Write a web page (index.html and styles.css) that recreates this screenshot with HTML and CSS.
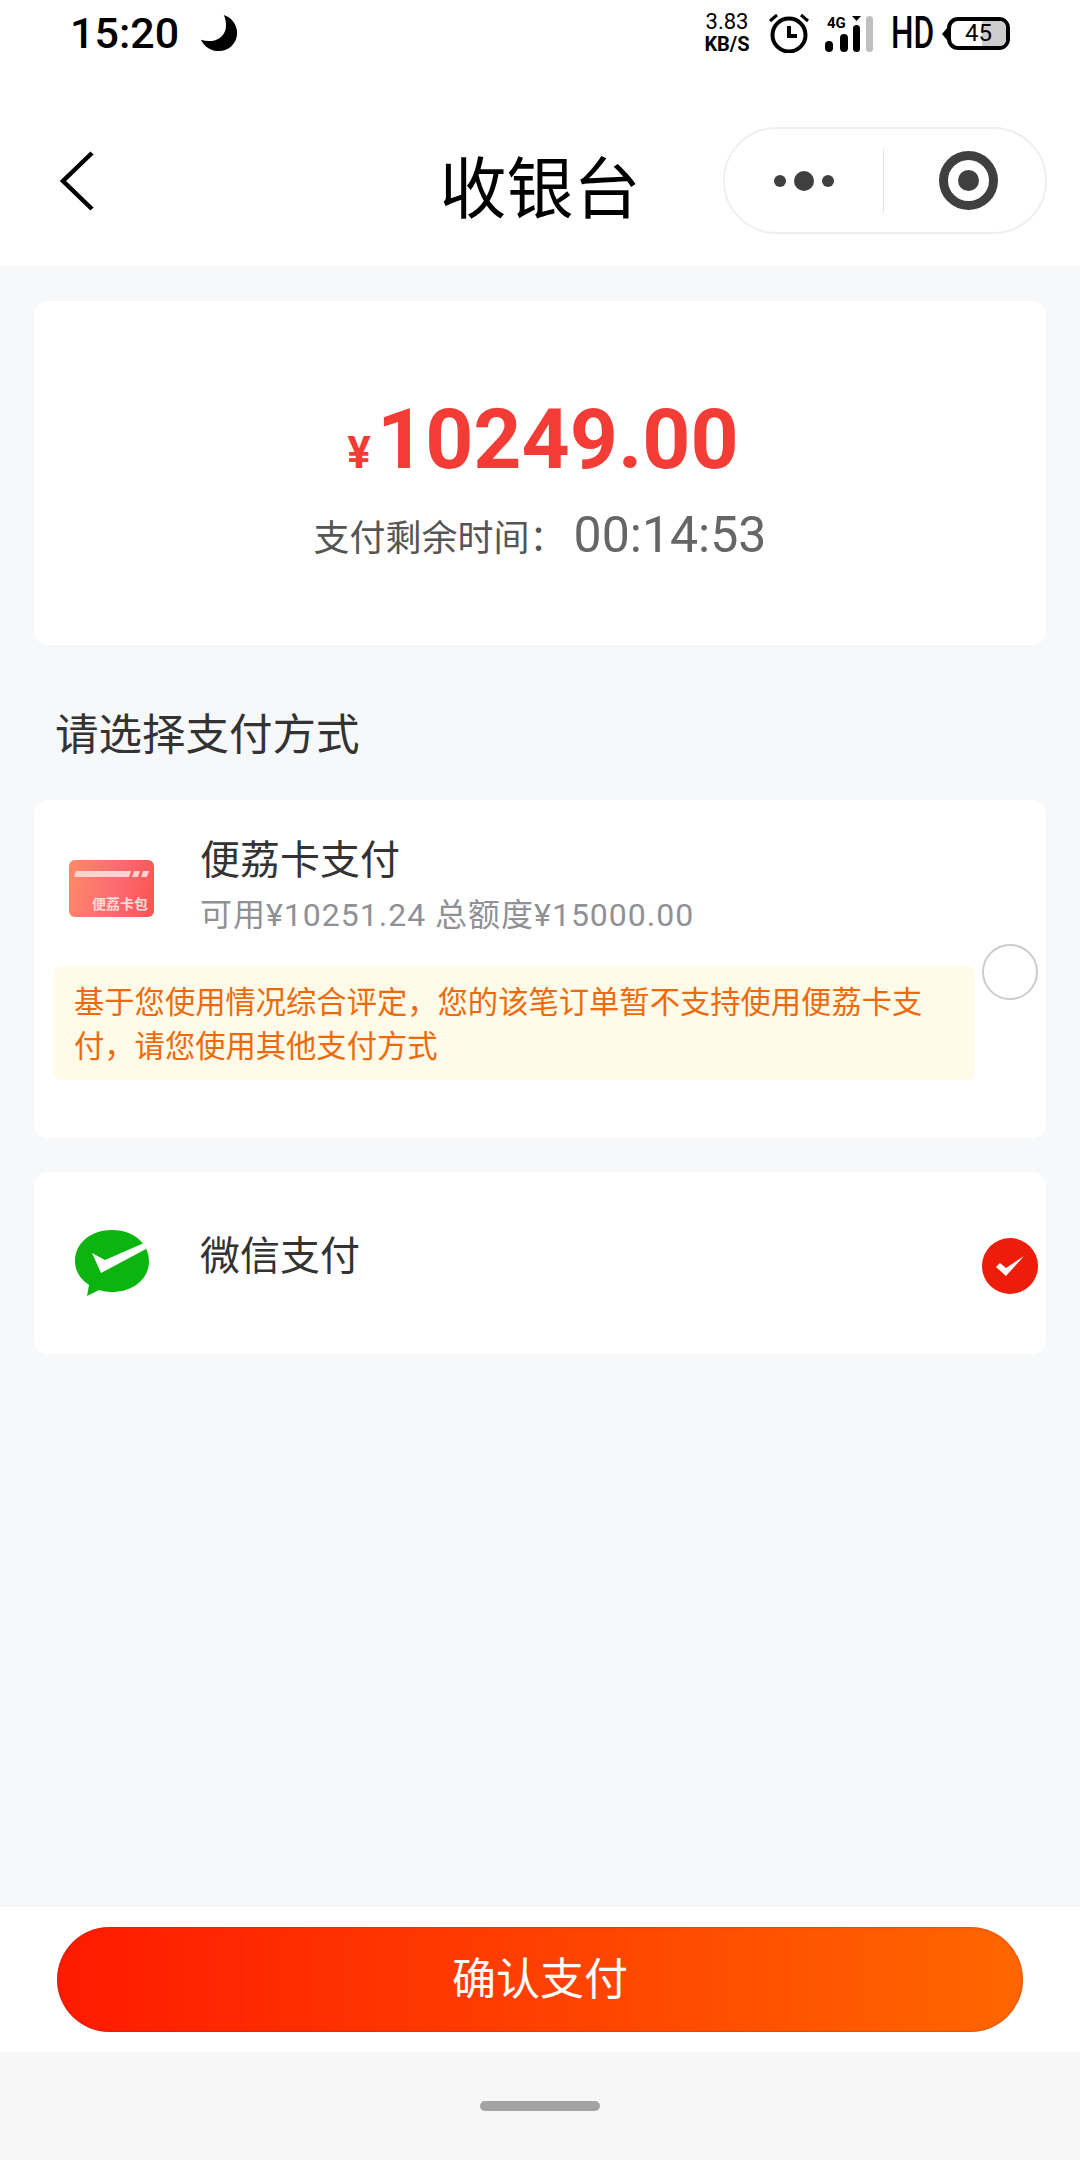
FILE: index.html
```html
<!DOCTYPE html>
<html lang="zh">
<head>
    <meta charset="UTF-8">
    <meta name="viewport" content="width=device-width, initial-scale=1.0">
    <title>收银台</title>
    <link rel="stylesheet" href="styles.css">
</head>
<body>
    <div class="page">
        <div class="status-bar">
            <div class="status-left">
                <span class="clock">15:20</span>
                <svg class="moon" width="40" height="40" viewBox="0 0 42 40"><path d="M26 1C33 3 40 10 40 20C40 31 31 39 21 39C13 39 6 35 2 27C13 31 25 27 28 16C29 10 28 5 26 1Z" fill="#000"/></svg>
            </div>
            <div class="status-right">
                <div class="speed"><span>3.83</span><span class="speed-unit">KB/S</span></div>
                <svg class="alarm" width="42" height="40" viewBox="0 0 42 40"><circle cx="21" cy="22" r="16.5" fill="none" stroke="#000" stroke-width="4"/><path d="M21 13V23H29" fill="none" stroke="#000" stroke-width="4"/><path d="M2 8L9 2M40 8L33 2" stroke="#000" stroke-width="3"/></svg>
                <div class="signal">
                    <span class="net">4G</span>
                    <svg width="50" height="40" viewBox="0 0 50 40"><rect x="0" y="28" width="8" height="11" rx="4" fill="#000"/><rect x="15" y="21" width="8" height="18" rx="4" fill="#000"/><rect x="28" y="12" width="7" height="27" rx="3.500" fill="#000"/><path d="M27 3H36L31.500 8Z" fill="#000"/><rect x="41" y="3" width="7" height="36" rx="3.500" fill="#bfbfbf"/></svg>
                </div>
                <span class="hd">HD</span>
                <div class="battery"><span class="battery-fill"></span><span class="battery-num">45</span></div>
            </div>
        </div>

        <div class="nav-bar">
            <svg class="back" width="36" height="60" viewBox="0 0 36 60"><path d="M33 2L4 30L33 58" fill="none" stroke="#000" stroke-width="4.500"/></svg>
            <h1 class="nav-title">收银台</h1>
            <div class="capsule">
                <div class="capsule-dots"><i class="dot"></i><i class="dot dot-big"></i><i class="dot"></i></div>
                <div class="capsule-line"></div>
                <div class="capsule-target"><i></i></div>
            </div>
        </div>

        <div class="content">
            <div class="card amount-card">
                <div class="amount"><span class="amount-sign">¥</span>10249.00</div>
                <div class="timer">支付剩余时间&#xFF1A;<span class="timer-num">00:14:53</span></div>
            </div>

            <div class="section-title">请选择支付方式</div>

            <div class="card pay-card litchi">
                <div class="pay-main">
                    <div class="pay-head">
                        <div class="pay-icon">
                            <div class="litchi-card">
                                <div class="litchi-stripe"><i class="stripe-long"></i><i class="stripe-short"></i><i class="stripe-short"></i></div>
                                <span class="litchi-text">便荔卡包</span>
                            </div>
                        </div>
                        <div class="pay-info">
                            <div class="pay-name">便荔卡支付</div>
                            <div class="pay-sub">可用¥10251.24 总额度¥15000.00</div>
                        </div>
                    </div>
                    <div class="notice">基于您使用情况综合评定&#xFF0C;您的该笔订单暂不支持使用便荔卡支付&#xFF0C;请您使用其他支付方式</div>
                </div>
                <span class="radio"></span>
            </div>

            <div class="card pay-card wechat">
                <div class="pay-main">
                    <div class="pay-head">
                        <div class="pay-icon">
                            <svg class="wechat-logo" width="74" height="66" viewBox="0 0 74 66"><path d="M37 0C58 0 74 13 74 31C74 49 58 62 37 62C32 62 28 61 24 60L12 66L14 55C5 49 0 41 0 31C0 13 16 0 37 0Z" fill="#0cb40f"/><path d="M17 23L30 30L69 13L71 19L26 43Z" fill="#fff"/></svg>
                        </div>
                        <div class="pay-info">
                            <div class="pay-name">微信支付</div>
                        </div>
                    </div>
                </div>
                <span class="radio radio-on">
                    <svg width="28" height="20" viewBox="0 0 28 20"><path d="M0 11L4 7L10 12L28 0L10 20Z" fill="#fff"/></svg>
                </span>
            </div>
        </div>

        <div class="footer">
            <button class="pay-btn">确认支付</button>
        </div>
        <div class="home-area"><span class="home-bar"></span></div>
    </div>
</body>
</html>
```

FILE: styles.css
```css
* { box-sizing: border-box; }
body { margin: 0; font-family: Roboto, "Noto Sans CJK SC", sans-serif; background-color: #f7f8fa; }
.page { width: 1080px; height: 2160px; display: flex; flex-direction: column; overflow: hidden; }

/* status bar */
.status-bar { height: 66px; background-color: #fff; display: flex; justify-content: space-between; align-items: center; padding: 0 70px; }
.status-left { display: flex; align-items: center; gap: 20px; }
.clock { font-size: 43px; font-weight: 500; color: #000; line-height: 1; }
.status-right { display: flex; align-items: center; }
.speed { display: flex; flex-direction: column; align-items: center; width: 48px; font-size: 22px; line-height: 22px; color: #000; }
.speed-unit { font-size: 20px; font-weight: 700; }
.alarm { margin-left: 17px; }
.signal { position: relative; width: 50px; height: 40px; margin-left: 15px; }
.signal svg { display: block; }
.net { position: absolute; left: 2px; top: 2px; font-size: 15px; line-height: 16px; font-weight: 700; color: #000; }
.hd { width: 38px; margin-left: 16px; font-size: 44px; font-weight: 500; color: #000; line-height: 1; transform: scaleX(0.72); transform-origin: left center; white-space: nowrap; }
.battery { position: relative; width: 63px; height: 33px; margin-left: 18px; border: 4px solid #000; border-radius: 11px; }
.battery::before { content: ""; position: absolute; left: -9px; top: 7px; border: 6px solid transparent; border-left: 0; border-right: 5px solid #000; }
.battery-fill { position: absolute; right: 0; top: 0; bottom: 0; width: 24px; background-color: #ccc; border-radius: 0 6px 6px 0; }
.battery-num { position: absolute; left: 0; right: 0; top: 0; text-align: center; font-size: 24px; line-height: 25px; color: #000; }

/* nav bar */
.nav-bar { height: 200px; background-color: #fff; display: grid; grid-template-columns: 1fr auto 1fr; align-items: start; }
.back { margin: 85px 0 0 59px; }
.nav-title { margin: 84px 0 0; font-size: 67px; font-weight: 400; color: #000; line-height: 1; font-family: "Noto Sans CJK SC", sans-serif; }
.capsule { justify-self: end; width: 324px; height: 107px; margin: 61px 33px 0 0; border: 2px solid #efefef; border-radius: 54px; display: flex; align-items: center; }
.capsule-dots { width: 158px; display: flex; align-items: center; justify-content: center; gap: 8px; }
.dot { width: 12px; height: 12px; border-radius: 50%; background-color: #3f3f3f; }
.dot-big { width: 20px; height: 20px; }
.capsule-line { width: 1px; height: 64px; background-color: #e5e5e5; }
.capsule-target { flex: 1; display: flex; align-items: center; justify-content: center; padding-left: 8px; }
.capsule-target i { width: 59px; height: 59px; border: 9px solid #3f3f3f; border-radius: 50%; display: flex; align-items: center; justify-content: center; }
.capsule-target i::after { content: ""; width: 21px; height: 21px; border-radius: 50%; background-color: #3f3f3f; }

/* content */
.content { flex: 1; padding: 35px 34px 0; display: flex; flex-direction: column; }
.card { background-color: #fff; border-radius: 14px; }
.amount-card { height: 344px; display: flex; flex-direction: column; align-items: center; padding-top: 90px; }
.amount { margin-left: 6px; font-size: 84px; font-weight: 700; color: #f43c36; line-height: 98px; }
.amount-sign { font-size: 44px; margin-right: 6px; }
.timer { font-size: 36px; color: #555; line-height: 54px; margin-top: 6px; display: flex; align-items: center; font-family: "Noto Sans CJK SC", sans-serif; }
.timer-num { font-size: 50px; color: #666; font-family: Roboto, sans-serif; margin-left: 8px; }
.section-title { height: 155px; padding: 57px 0 0 21px; font-size: 43.500px; color: #333; line-height: 60px; font-family: "Noto Sans CJK SC", sans-serif; }

.pay-card { display: flex; align-items: flex-start; }
.pay-main { flex: 1; }
.litchi { height: 338px; }
.wechat { height: 182px; margin-top: 34px; }
.pay-head { display: flex; align-items: flex-start; }
.litchi .pay-head { height: 166px; padding-top: 29px; }
.wechat .pay-head { padding-top: 53px; }
.pay-icon { width: 166px; display: flex; justify-content: center; flex-shrink: 0; padding-right: 11px; }
.pay-name { font-size: 40px; line-height: 56px; color: #333; font-family: "Noto Sans CJK SC", sans-serif; }
.pay-sub { font-size: 32px; line-height: 44px; margin-top: 8px; letter-spacing: 1px; color: #8f9196; }
.litchi-card { width: 85px; height: 57px; margin-top: 31px; border-radius: 6px; background: linear-gradient(100deg, #ff8a66, #fc6a72 55%, #fb5351); position: relative; padding: 11px 6px 0; }
.litchi-stripe { display: flex; gap: 3px; }
.litchi-stripe i { height: 6px; background-color: #ffd3cf; transform: skewX(-20deg); }
.stripe-long { width: 55px; }
.stripe-short { width: 6px; }
.litchi-text { position: absolute; right: 6px; bottom: 4px; font-size: 14px; line-height: 18px; font-weight: 700; color: #ffdcd8; white-space: nowrap; }
.wechat-logo { margin-top: 5px; }
.notice { height: 114px; margin: 0 7px 0 20px; padding: 12px 30px 0 20px; background-color: #fffbe8; border-radius: 8px; font-size: 30.300px; line-height: 44px; color: #ed6a0c; font-family: "Noto Sans CJK SC", sans-serif; }
.radio { width: 56px; height: 56px; margin: 144px 8px 0 0; border: 2px solid #ccc; border-radius: 50%; display: flex; align-items: center; justify-content: center; flex-shrink: 0; }
.wechat .radio { margin-top: 66px; }
.radio-on { background-color: #ee1c0a; border: none; }

/* footer */
.footer { height: 145px; background-color: #fff; padding: 20px 57px; }
.pay-btn { display: block; width: 100%; height: 105px; padding: 0 0 7px; border: none; border-radius: 53px; background: linear-gradient(90deg, #ff1a00, #ff6600); color: #fff; font-size: 44px; font-family: "Noto Sans CJK SC", sans-serif; box-shadow: inset 0 0 2px rgba(120, 30, 0, 0.6); }
.home-area { height: 108px; background-color: #f7f7f7; display: flex; justify-content: center; align-items: flex-start; padding-top: 49px; }
.home-bar { width: 120px; height: 10px; border-radius: 5px; background-color: #a3a3a3; }
```
